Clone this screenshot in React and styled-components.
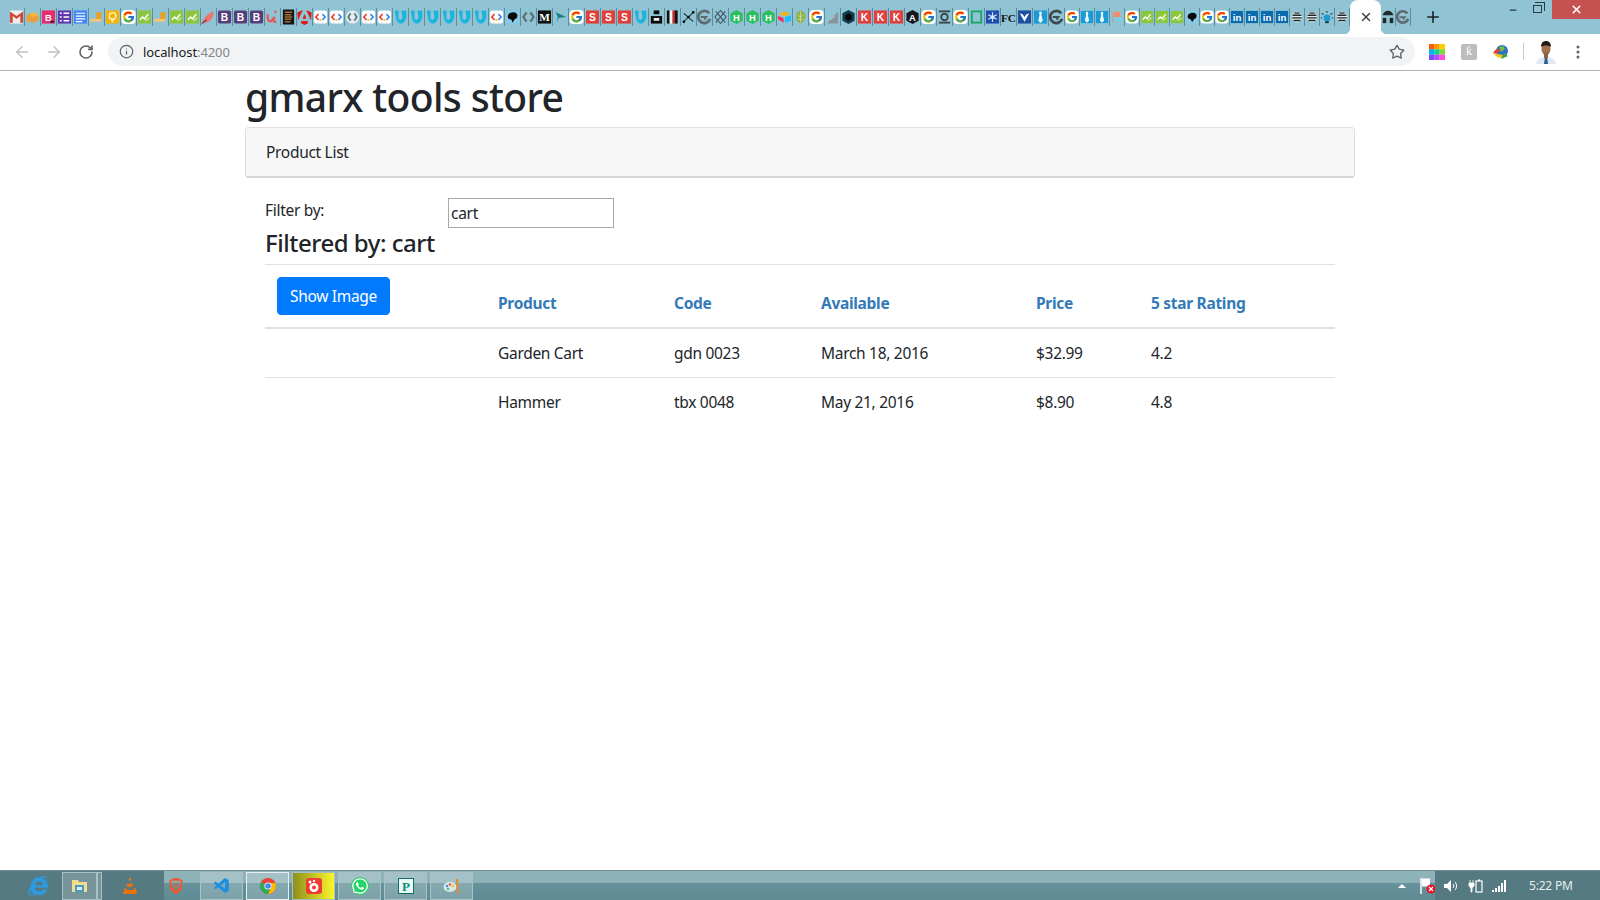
import React from 'react';
import styled, { createGlobalStyle } from 'styled-components';
import { ArrowLeft, ArrowRight, RotateCw, Info, Star, X, Plus, Minus } from 'lucide-react';
import { FcGoogle } from 'react-icons/fc';
import { FaWhatsapp, FaInternetExplorer } from 'react-icons/fa';
import { SiAngular, SiBrave, SiVlcmediaplayer } from 'react-icons/si';
import { VscVscode } from 'react-icons/vsc';

const GlobalStyle = createGlobalStyle`
  html, body { margin: 0; padding: 0; height: 100%; background: #fff; overflow: hidden; }
  #root { height: 100%; }
  * { box-sizing: border-box; }
`;

const Page = styled.div`
  display: flex;
  flex-direction: column;
  height: 900px;
  font-family: 'Noto Sans', 'Open Sans', sans-serif;
  color: #212529;
`;

/* browser chrome */
const TabStrip = styled.div`
  display: flex;
  height: 34px;
  padding-left: 9px;
  background: #90c4d4;
  flex-shrink: 0;
`;

const PinnedTab = styled.div`
  display: flex;
  align-items: center;
  justify-content: center;
  width: ${p => p.$w || 16}px;
  height: 18px;
  margin-top: 8px;
  border-right: 1px solid #5f8d9c;
  svg { display: block; }
`;

const ActiveTab = styled.div`
  position: relative;
  display: flex;
  align-items: center;
  justify-content: center;
  width: 31px;
  height: 34px;
  background: #fff;
  border-radius: 8px 8px 0 0;
  color: #3c4043;
  &::before, &::after {
    content: '';
    position: absolute;
    bottom: 0;
    width: 6px;
    height: 6px;
  }
  &::before { left: -6px; background: radial-gradient(circle at 0 0, transparent 6px, #fff 6.5px); }
  &::after { right: -6px; background: radial-gradient(circle at 100% 0, transparent 6px, #fff 6.5px); }
`;

const NewTab = styled.div`
  display: flex;
  align-items: center;
  justify-content: center;
  width: 24px;
  height: 34px;
  margin-left: 10px;
  color: #202124;
`;

const WindowControls = styled.div`
  display: flex;
  align-items: flex-start;
  margin-left: auto;
  height: 19px;
`;

const WindowButton = styled.div`
  display: flex;
  align-items: center;
  justify-content: center;
  width: ${p => p.$w}px;
  height: 19px;
  margin-left: ${p => (p.$close ? 4 : 0)}px;
  color: ${p => (p.$close ? '#fff' : '#2b3c42')};
  background: ${p => (p.$close ? '#c75050' : 'transparent')};
`;

const RestoreGlyph = styled.div`
  position: relative;
  width: 9px;
  height: 8px;
  margin-top: -1px;
  border: 1px solid #2b3c42;
  background: #90c4d4;
  &::before {
    content: '';
    position: absolute;
    top: -4px;
    left: 1px;
    width: 9px;
    height: 8px;
    border: 1px solid #2b3c42;
    border-left: 0;
    border-bottom: 0;
  }
`;

const Toolbar = styled.div`
  display: flex;
  align-items: center;
  height: 37px;
  padding: 0 0 1px 13px;
  background: #fff;
  border-bottom: 1px solid #b4b4b4;
  flex-shrink: 0;
`;

const NavButton = styled.div`
  display: flex;
  align-items: center;
  justify-content: center;
  width: 18px;
  height: 18px;
  margin-right: 14px;
  color: ${p => (p.$off ? '#bdc1c6' : '#5f6368')};
`;

const Omnibox = styled.div`
  display: flex;
  align-items: center;
  width: 1307px;
  height: 29px;
  margin-left: -1px;
  padding: 0 10px 0 11px;
  border-radius: 15px;
  background: #f1f3f4;
  font-size: 13px;
  color: #202124;
`;

const Url = styled.span`
  margin-left: 9px;
  letter-spacing: -0.1px;
  span { color: #80868b; }
`;

const StarButton = styled.div`
  display: flex;
  margin-left: auto;
  color: #5f6368;
`;

const ToolbarIcons = styled.div`
  display: flex;
  align-items: center;
  margin-left: 6px;
`;

const ExtIcon = styled.div`
  display: flex;
  align-items: center;
  justify-content: center;
  width: 32px;
  height: 24px;
`;

const KnownBadge = styled.div`
  display: flex;
  align-items: center;
  justify-content: center;
  width: 16px;
  height: 16px;
  border-radius: 2px;
  background: #bdbdbd;
  color: #fff;
  font: 12px 'Liberation Serif', serif;
`;

const ToolbarDivider = styled.div`
  width: 1px;
  height: 17px;
  margin: 0 6px;
  background: #c8ccd0;
`;

/* page */
const Main = styled.main`
  flex: 1;
  width: 1110px;
  margin-left: 245px;
`;

const Title = styled.h1`
  margin: 0;
  height: 56px;
  padding-top: 2px;
  font-size: 39px;
  font-weight: 500;
  line-height: 48px;
  letter-spacing: -0.65px;
  color: #212529;
`;

const PanelHeader = styled.div`
  display: flex;
  align-items: center;
  height: 51px;
  padding: 0 20px 1px 20px;
  font-size: 15.5px;
  letter-spacing: -0.3px;
  background: #f7f7f7;
  border: 1px solid #dfdfdf;
  border-bottom: 2px solid #d5d5d5;
  border-radius: 4px;
`;

const PanelBody = styled.div`
  padding: 20px 20px 0;
`;

const FilterRow = styled.div`
  display: flex;
  align-items: flex-start;
  height: 30px;
`;

const FilterLabel = styled.label`
  width: 183px;
  font-size: 15.5px;
  line-height: 24px;
  letter-spacing: -0.3px;
`;

const FilterInput = styled.input`
  width: 166px;
  height: 30px;
  padding: 1px 2px;
  border: 1px solid #a9a9a9;
  border-radius: 0;
  outline: none;
  font-family: inherit;
  font-size: 15.5px;
  letter-spacing: -0.3px;
  color: #212529;
`;

const FilterHeading = styled.h4`
  margin: 0;
  height: 36px;
  font-size: 24px;
  font-weight: 500;
  line-height: 29px;
  letter-spacing: -0.48px;
`;

const Table = styled.table`
  width: 1070px;
  border-collapse: collapse;
  table-layout: fixed;
  font-size: 15.5px;
  letter-spacing: -0.3px;
`;

const HeadCell = styled.th`
  width: ${p => p.$w}px;
  padding: 12px;
  text-align: left;
  vertical-align: bottom;
  font-weight: 700;
  line-height: 24px;
  color: #337ab7;
  border-top: 1px solid #dee2e6;
  border-bottom: 2px solid #dee2e6;
`;

const Cell = styled.td`
  height: 49px;
  padding: 12px;
  line-height: 24px;
  border-bottom: ${p => (p.$last ? 'none' : '1px solid #dee2e6')};
`;

const ShowButton = styled.button`
  display: block;
  width: 113px;
  height: 38px;
  padding: 0;
  border: 1px solid #007bff;
  border-radius: 4px;
  background: #007bff;
  color: #fff;
  font-family: inherit;
  font-size: 15.5px;
  letter-spacing: -0.3px;
`;

/* windows taskbar */
const Taskbar = styled.footer`
  display: flex;
  height: 30px;
  border-top: 1px solid #6f8f95;
  flex-shrink: 0;
`;

const TaskStart = styled.div`
  display: flex;
  align-items: center;
  width: 164px;
  padding-left: 24px;
  background: #557a82;
`;

const TaskMiddle = styled.div`
  display: flex;
  align-items: center;
  flex: 1;
  padding-left: 12px;
  gap: 3px;
  background: linear-gradient(180deg, #8db2b8 0, #8db2b8 40%, #66939b 42%, #5e8b94 100%);
`;

const TaskEnd = styled.div`
  display: flex;
  align-items: center;
  width: 165px;
  padding-left: 4px;
  background: #557a82;
`;

const TaskIcon = styled.div`
  display: flex;
  align-items: center;
  justify-content: center;
  width: ${p => p.$w || 28}px;
  height: 28px;
`;

const TaskButton = styled.div`
  display: flex;
  align-items: center;
  justify-content: center;
  width: ${p => p.$w || 43}px;
  height: 28px;
  margin-left: ${p => p.$ml || 0}px;
  border: 1px solid ${p => (p.$focus ? '#e6eeef' : '#a9c1c5')};
  background: ${p => p.$bg || 'rgba(255, 255, 255, 0.2)'};
`;

const BraveSlot = styled.div`
  position: relative;
  display: flex;
  align-items: center;
  justify-content: center;
  width: 24px;
  height: 29px;
  margin-left: -12px;
  color: #f0562a;
`;

const TrayFlag = styled.div`
  display: flex;
  margin-right: -1px;
`;

const TrayArrow = styled.div`
  width: 0;
  height: 0;
  margin-right: 11px;
  margin-left: auto;
  border-left: 4px solid transparent;
  border-right: 4px solid transparent;
  border-bottom: 4px solid #fff;
`;

const TrayIcon = styled.div`
  display: flex;
  align-items: center;
  justify-content: center;
  width: 24px;
  color: #fff;
`;

const Clock = styled.span`
  margin-left: 18px;
  font-size: 12px;
  letter-spacing: -0.2px;
  color: #e6eeee;
`;

const Box = ({ bg, r = 1, children }) => (
  <svg width="16" height="16" viewBox="0 0 16 16">
    <rect x="1" y="1" width="14" height="14" rx={r} fill={bg} />
    {children}
  </svg>
);

const Letter = ({ fill = '#fff', size = 11, family = 'Liberation Sans', weight = 700, children }) => (
  <text x="8" y="12" fontSize={size} fontFamily={family} fontWeight={weight} textAnchor="middle" fill={fill}>{children}</text>
);

const Wave = () => (
  <Box bg="#8cc63f" r={0}>
    <path d="M3 11l3-3 2 2 4-5" fill="none" stroke="#fff" strokeWidth="1.6" />
    <path d="M9 12l4-3" stroke="#dff0c4" strokeWidth="1.2" />
  </Box>
);

const Code = () => (
  <Box bg="#fff" r={3}>
    <path d="M6 5L3 8l3 3" fill="none" stroke="#ea4335" strokeWidth="1.8" />
    <path d="M10 5l3 3-3 3" fill="none" stroke="#4285f4" strokeWidth="1.8" />
    <path d="M7 11h2" stroke="#fbbc05" strokeWidth="1.8" />
  </Box>
);

const Ring = ({ color = '#5b7c86' }) => (
  <svg width="16" height="16" viewBox="0 0 16 16">
    <circle cx="8" cy="8" r="7" fill="#e8eef0" />
    <path d="M6 4L3.5 8 6 12M10 4l2.5 4-2.5 4" fill="none" stroke={color} strokeWidth="2" />
  </svg>
);

const Bee = () => (
  <svg width="16" height="16" viewBox="0 0 16 16">
    <ellipse cx="8" cy="8" rx="6" ry="6" fill="#e6eef0" />
    <path d="M3 6h10M2.500 9h11M4 12h8" stroke="#1e2528" strokeWidth="1.6" />
    <path d="M5 3.500h6" stroke="#1e2528" strokeWidth="1.4" />
  </svg>
);

const Swirl = ({ color = '#5d6b70' }) => (
  <svg width="16" height="16" viewBox="0 0 16 16">
    <path d="M13 4a6.500 6.500 0 1 0 1 6" fill="none" stroke={color} strokeWidth="3" />
    <path d="M4 8h6l-2 3" fill="none" stroke={color} strokeWidth="2" />
  </svg>
);

const Blob = () => (
  <svg width="16" height="16" viewBox="0 0 16 16">
    <rect x="1" y="1" width="14" height="14" fill="#86cbe8" />
    <path d="M3 8c0-4 3-5 6-5s5 2 4 5-2 1-3 3l-2 3-1-3C5 10 3 10 3 8z" fill="#0b0b0b" />
  </svg>
);

const Tie = () => (
  <Box bg="#1b9ad6" r={0}>
    <path d="M7 2h2l.5 2L9 6l1.500 6L8 14.500 5.500 12 7 6l-.5-2z" fill="#e8f6fc" />
  </Box>
);

const Uu = () => (
  <svg width="16" height="16" viewBox="0 0 16 16">
    <path d="M2 1h4c0 5-1 10 2 10 3 0 2-5 1-10h5c1 6 0 13-5 14-6 0-6-7-7-14z" fill="#19b5de" />
  </svg>
);

const BarOrange = () => (
  <svg width="16" height="16" viewBox="0 0 16 16">
    <rect x="8" y="3" width="5" height="8" fill="#f39c12" />
    <rect x="1" y="10" width="12" height="3" fill="#f8c471" />
  </svg>
);

const Favicons = {
  gmail: () => (
    <Box bg="#efefef" r={0}>
      <path d="M1 2v12h3V7l4 3 4-3v7h3V2L8 7z" fill="#d14836" />
    </Box>
  ),
  cake: () => (
    <svg width="16" height="16" viewBox="0 0 16 16">
      <ellipse cx="8" cy="9" rx="7" ry="5" fill="#e9a23b" />
      <path d="M5 5c3-3 8-2 9 1l-6 2z" fill="#f6b73c" />
    </svg>
  ),
  pinkB: () => (
    <Box bg="#e92c6c" r={0}>
      <Letter size={10}>B</Letter>
      <rect x="10" y="12" width="4" height="2" fill="#1d1b3a" />
    </Box>
  ),
  list: () => (
    <Box bg="#5f37b0" r={0}>
      <path d="M3 4h2M7 4h6M3 8h2M7 8h6M3 12h2M7 12h6" stroke="#fff" strokeWidth="1.6" />
    </Box>
  ),
  docs: () => (
    <Box bg="#4285f4" r={0}>
      <path d="M3 4h10M3 7h10M3 10h10M3 13h7" stroke="#fff" strokeWidth="1.3" />
    </Box>
  ),
  bar: BarOrange,
  bulb: () => (
    <Box bg="#f4b400" r={1}>
      <circle cx="8" cy="7" r="3.500" fill="none" stroke="#fff" strokeWidth="1.2" />
      <path d="M6.500 11h3M7 13h2" stroke="#fff" strokeWidth="1.2" />
    </Box>
  ),
  g: () => (
    <svg width="16" height="16" viewBox="0 0 16 16">
      <rect x="0.500" y="0.500" width="15" height="15" rx="4" fill="#fff" />
      <foreignObject x="1" y="1" width="14" height="14"><FcGoogle size={14} /></foreignObject>
    </svg>
  ),
  wave: Wave,
  feather: () => (
    <svg width="16" height="16" viewBox="0 0 16 16">
      <path d="M1 14c2-6 7-10 12-12 1 5-2 11-8 12z" fill="#ee7470" />
      <path d="M1 15l5-4" stroke="#7d3c52" strokeWidth="1.4" />
    </svg>
  ),
  b: () => (
    <Box bg="#563d7c" r={2}>
      <Letter>B</Letter>
    </Box>
  ),
  u: () => (
    <svg width="16" height="16" viewBox="0 0 16 16">
      <path d="M3 5C2 10 4 14 7 12l3-4c-1 4-1 6 2 5M10 3l2-1" fill="none" stroke="#e8585c" strokeWidth="2.4" />
    </svg>
  ),
  brown: () => (
    <svg width="16" height="16" viewBox="0 0 16 16">
      <rect x="2" y="0" width="12" height="16" fill="#151515" />
      <path d="M4 3h8M4 5.500h7M4 8h8M4 10.500h7M4 13h6" stroke="#a46f33" strokeWidth="1.6" />
    </svg>
  ),
  angular: () => <SiAngular size={15} color="#dd1b16" />,
  code: Code,
  ring: () => <Ring />,
  y: Uu,
  blob: Blob,
  greyRing: () => (
    <svg width="16" height="16" viewBox="0 0 16 16">
      <path d="M6 3L2.500 8 6 13M10 3l3.500 5L10 13" fill="none" stroke="#5d6b70" strokeWidth="2.2" />
    </svg>
  ),
  m: () => (
    <Box bg="#111" r={0}>
      <Letter family="Liberation Serif" size={12}>M</Letter>
    </Box>
  ),
  arrow: () => (
    <svg width="16" height="16" viewBox="0 0 16 16">
      <path d="M3 3l11 5-8 1-2 5 1-6z" fill="#17808a" />
    </svg>
  ),
  s: () => (
    <Box bg="#e0403a" r={0}>
      <Letter>S</Letter>
    </Box>
  ),
  yBlue: Uu,
  block: () => (
    <svg width="16" height="16" viewBox="0 0 16 16">
      <rect x="2" y="7" width="12" height="8" fill="#0a0a0a" />
      <rect x="5" y="1" width="6" height="4" fill="#0a0a0a" />
      <rect x="5" y="9" width="6" height="3" fill="#e8eef0" />
    </svg>
  ),
  stripes: () => (
    <svg width="16" height="16" viewBox="0 0 16 16">
      <rect x="2" y="1" width="3" height="14" fill="#111" />
      <rect x="5" y="1" width="3" height="14" fill="#f4f4f4" />
      <rect x="8" y="1" width="2.500" height="14" fill="#d21f26" />
      <rect x="10.500" y="1" width="3" height="14" fill="#111" />
    </svg>
  ),
  xnet: () => (
    <svg width="16" height="16" viewBox="0 0 16 16">
      <path d="M3 13L13 3M3 4l10 9" stroke="#22343b" strokeWidth="1.1" />
      <circle cx="3" cy="13" r="1.400" /><circle cx="13" cy="3" r="1.400" />
      <circle cx="8" cy="8" r="1.400" fill="#111" />
    </svg>
  ),
  swirl: () => <Swirl />,
  xdiamond: () => (
    <svg width="16" height="16" viewBox="0 0 16 16">
      <path d="M8 1l6 7-6 7-6-7zM3 2l10 12M13 2L3 14" fill="none" stroke="#3a5560" strokeWidth="1.1" />
    </svg>
  ),
  h: () => (
    <svg width="16" height="16" viewBox="0 0 16 16">
      <path d="M8 0.500l6.500 3.500v8L8 15.500 1.500 12V4z" fill="#2dbe60" />
      <Letter size={10}>H</Letter>
    </svg>
  ),
  air: () => (
    <svg width="16" height="16" viewBox="0 0 16 16">
      <path d="M2 5l6-3 6 3-6 2z" fill="#fcb400" />
      <path d="M8.500 8L15 6v6l-6.500 2z" fill="#18bfff" />
      <path d="M1 7l6 2v5L1 10z" fill="#f82b60" />
    </svg>
  ),
  leaf: () => (
    <svg width="16" height="16" viewBox="0 0 16 16">
      <path d="M8 1c4 1 6 4 5 8-1 3-3 5-5 6-3-2-5-4-5-7 0-3 2-6 5-7z" fill="#8fb04a" />
      <path d="M8 2v12M5 6l3 2 3-2M5 10l3 1 3-1" stroke="#c4dc8c" strokeWidth="1" fill="none" />
    </svg>
  ),
  stair: () => (
    <svg width="16" height="16" viewBox="0 0 16 16">
      <path d="M2 15L14 2v13z" fill="#8a9499" />
      <path d="M6 11l4-4" stroke="#c8d0d4" />
    </svg>
  ),
  hex: () => (
    <svg width="16" height="16" viewBox="0 0 16 16">
      <path d="M8 0.500l6.500 3.500v8L8 15.500 1.500 12V4z" fill="#123c4a" />
      <path d="M8 4l3.500 2v4L8 12 4.500 10V6z" fill="#060606" />
    </svg>
  ),
  k: () => (
    <Box bg="#e0403f" r={0}>
      <Letter>K</Letter>
    </Box>
  ),
  aBlack: () => (
    <svg width="16" height="16" viewBox="0 0 16 16">
      <path d="M8 0.500l6.500 3.500v8L8 15.500 1.500 12V4z" fill="#15191e" />
      <Letter size={10}>A</Letter>
    </svg>
  ),
  o: () => (
    <svg width="16" height="16" viewBox="0 0 16 16">
      <rect x="2" y="1" width="12" height="2" fill="#3b474c" />
      <rect x="2" y="13" width="12" height="2" fill="#3b474c" />
      <circle cx="8" cy="8" r="3.500" fill="none" stroke="#3b474c" strokeWidth="2" />
    </svg>
  ),
  rect: () => (
    <svg width="16" height="16" viewBox="0 0 16 16">
      <rect x="3" y="2" width="10" height="12" fill="none" stroke="#1aa866" strokeWidth="2" />
    </svg>
  ),
  snow: () => (
    <Box bg="#1f4eb0" r={0}>
      <path d="M8 3v10M3.500 5.500l9 5M12.500 5.500l-9 5" stroke="#dce8ff" strokeWidth="1.200" />
      <circle cx="8" cy="8" r="2" fill="#dce8ff" />
    </Box>
  ),
  fc: () => (
    <svg width="16" height="16" viewBox="0 0 16 16">
      <text x="8" y="13" fontSize="12" fontFamily="Liberation Serif" fontWeight="700" textAnchor="middle" fill="#111">FC</text>
    </svg>
  ),
  vBlue: () => (
    <Box bg="#1c4fa0" r={0}>
      <path d="M3 4l5 9 5-9-3 1-2 3-2-3z" fill="#fff" />
    </Box>
  ),
  tie: Tie,
  darkSwirl: () => <Swirl color="#3c4a52" />,
  flag: () => (
    <svg width="16" height="16" viewBox="0 0 16 16">
      <path d="M3 2v13" stroke="#9bb0b8" strokeWidth="1.500" />
      <path d="M4 2h8l-1 3 2 3H4z" fill="#f28a70" />
      <rect x="6" y="8" width="8" height="5" fill="#7ecbe8" />
    </svg>
  ),
  linkedin: () => (
    <Box bg="#0a6ab0" r={0}>
      <text x="8" y="13" fontSize="11" fontFamily="Liberation Sans" fontWeight="700" textAnchor="middle" fill="#fff">in</text>
    </Box>
  ),
  bee: Bee,
  bulbBlue: () => (
    <svg width="16" height="16" viewBox="0 0 16 16">
      <circle cx="8" cy="9" r="4" fill="#1d9ad6" />
      <rect x="6" y="13" width="4" height="2" fill="#222" />
      <path d="M8 1v2M2 4l2 1M14 4l-2 1M1 9h1M14 9h1" stroke="#222" strokeWidth="1.200" />
    </svg>
  ),
  headset: () => (
    <svg width="16" height="16" viewBox="0 0 16 16">
      <path d="M2 6c1-7 11-7 12 0z" fill="#20282c" />
      <rect x="2" y="9" width="4" height="6" fill="#20282c" />
      <rect x="10" y="9" width="4" height="6" fill="#20282c" />
    </svg>
  ),
};

const kinds = [
  'gmail', 'cake', 'pinkB', 'list', 'docs', 'bar', 'bulb', 'g', 'wave', 'bar', 'wave', 'wave', 'feather',
  'b', 'b', 'b', 'u', 'brown', 'angular', 'code', 'code', 'ring', 'code', 'code',
  'y', 'y', 'y', 'y', 'y', 'y', 'code', 'blob', 'greyRing', 'm', 'arrow', 'g', 's', 's', 's', 'yBlue',
  'block', 'stripes', 'xnet', 'swirl', 'xdiamond', 'h', 'h', 'h', 'air', 'leaf', 'g', 'stair', 'hex',
  'k', 'k', 'k', 'aBlack', 'g', 'o', 'g', 'rect', 'snow', 'fc', 'vBlue', 'tie', 'darkSwirl', 'g',
  'tie', 'tie', 'flag', 'g', 'wave', 'wave', 'wave', 'blob', 'g', 'g',
  'linkedin', 'linkedin', 'linkedin', 'linkedin', 'bee', 'bee', 'bulbBlue', 'bee',
];

const columns = [
  { label: 'Product', w: 176 },
  { label: 'Code', w: 147 },
  { label: 'Available', w: 215 },
  { label: 'Price', w: 115 },
  { label: '5 star Rating', w: 196 },
];

const products = [
  { name: 'Garden Cart', code: 'gdn 0023', date: 'March 18, 2016', price: '$32.99', rating: '4.2' },
  { name: 'Hammer', code: 'tbx 0048', date: 'May 21, 2016', price: '$8.90', rating: '4.8' },
];

const ColorGrid = () => (
  <svg width="16" height="16" viewBox="0 0 16 16">
    <rect width="5.400" height="5.400" fill="#ff5a00" /><rect x="5.300" width="5.400" height="5.400" fill="#ff9a00" /><rect x="10.600" width="5.400" height="5.400" fill="#ffd000" />
    <rect y="5.300" width="5.400" height="5.400" fill="#00b4f0" /><rect x="5.300" y="5.300" width="5.400" height="5.400" fill="#17d38a" /><rect x="10.600" y="5.300" width="5.400" height="5.400" fill="#7ddc3c" />
    <rect y="10.600" width="5.400" height="5.400" fill="#7a4dff" /><rect x="5.300" y="10.600" width="5.400" height="5.400" fill="#b54dff" /><rect x="10.600" y="10.600" width="5.400" height="5.400" fill="#ff4de0" />
  </svg>
);

const IdmGlobe = () => (
  <svg width="18" height="16" viewBox="0 0 18 16">
    <circle cx="10" cy="7" r="6" fill="#2f6fc4" />
    <path d="M7 3l4-1 2 3-4 3z" fill="#6cc04a" />
    <path d="M1 9c2-4 5-5 8-4L7 7c-1 1-2 2-2 3z" fill="#e8412c" />
    <path d="M1 9c2 3 6 5 9 5l1-3-5-1z" fill="#f6c21c" />
    <path d="M9 15l3-6 4 3z" fill="#3f9e3f" />
  </svg>
);

const Avatar = () => (
  <svg width="20" height="24" viewBox="0 0 20 24">
    <path d="M0 24c1-5 5-7 10-7s9 2 10 7z" fill="#dfe9f2" />
    <path d="M9 17h2l1 7H8z" fill="#2b5c8e" />
    <ellipse cx="10" cy="9" rx="4.500" ry="6" fill="#a4714e" />
    <path d="M5 7c0-4 2-6 5-6s5 2 5 6c-2-2-8-2-10 0z" fill="#221a14" />
    <rect x="8" y="13" width="4" height="5" fill="#8f5f3f" />
  </svg>
);

const Dots = () => (
  <svg width="4" height="14" viewBox="0 0 4 14">
    <circle cx="2" cy="2" r="1.500" fill="#5f6368" /><circle cx="2" cy="7" r="1.500" fill="#5f6368" /><circle cx="2" cy="12" r="1.500" fill="#5f6368" />
  </svg>
);

const ChromeLogo = () => (
  <svg width="16" height="16" viewBox="0 0 16 16">
    <circle cx="8" cy="8" r="8" fill="#ea4335" />
    <path d="M8 8L1 4a8 8 0 0 0 7 12l4-8z" fill="#34a853" />
    <path d="M8 5h7.400A8 8 0 0 1 8 16l4-8z" fill="#fbbc05" />
    <circle cx="8" cy="8" r="3.600" fill="#fff" /><circle cx="8" cy="8" r="2.800" fill="#4285f4" />
  </svg>
);

const RedCamera = () => (
  <svg width="16" height="16" viewBox="0 0 16 16">
    <rect width="16" height="16" rx="3" fill="#ef3a35" />
    <circle cx="8" cy="9.500" r="4.500" fill="#fff" /><circle cx="8" cy="9.500" r="2" fill="#ef3a35" />
    <circle cx="4" cy="4" r="1.500" fill="#fff" /><circle cx="8" cy="3" r="1.200" fill="#fff" />
  </svg>
);

const PublisherLogo = () => (
  <svg width="16" height="16" viewBox="0 0 16 16">
    <rect x="0.500" y="0.500" width="15" height="15" fill="#e9fbf6" stroke="#0e6f62" />
    <text x="8" y="13" fontSize="13" fontFamily="Liberation Serif" fontWeight="700" textAnchor="middle" fill="#0a8f7c">P</text>
  </svg>
);

const PaintLogo = () => (
  <svg width="18" height="18" viewBox="0 0 18 18">
    <ellipse cx="7" cy="10" rx="6.500" ry="5" fill="#dce6ea" />
    <circle cx="4" cy="9" r="1.200" fill="#3f8fd6" /><circle cx="7" cy="7.500" r="1.200" fill="#e84c3d" />
    <circle cx="10" cy="9" r="1.200" fill="#f1c40f" /><circle cx="5" cy="12" r="1.200" fill="#2ecc71" />
    <path d="M14 2l1 15" stroke="#e08a2e" strokeWidth="2" />
  </svg>
);

const SpeakerIcon = () => (
  <svg width="16" height="16" viewBox="0 0 16 16">
    <path d="M1 6h3l4-4v12l-4-4H1z" fill="#fff" />
    <path d="M10 6c1 1 1 3 0 4M12 4c2 2 2 6 0 8" fill="none" stroke="#fff" />
  </svg>
);

const PowerIcon = () => (
  <svg width="16" height="16" viewBox="0 0 16 16">
    <path d="M3 2v3M6 2v3M2 5h5v3l-2 2v4H4v-4L2 8z" fill="#fff" stroke="#fff" strokeWidth="0.800" />
    <rect x="9" y="3" width="6" height="11" fill="none" stroke="#fff" strokeWidth="1.200" />
    <rect x="11" y="1.500" width="2" height="1.500" fill="#fff" />
  </svg>
);

const SignalIcon = () => (
  <svg width="16" height="14" viewBox="0 0 16 14">
    <rect x="1" y="11" width="2" height="2" fill="#fff" /><rect x="4" y="9" width="2" height="4" fill="#fff" />
    <rect x="7" y="7" width="2" height="6" fill="#fff" /><rect x="10" y="4" width="2" height="9" fill="#fff" />
    <rect x="13" y="1" width="2" height="12" fill="#fff" />
  </svg>
);

const FlagIcon = () => (
  <svg width="16" height="18" viewBox="0 0 16 18">
    <path d="M1 1v16" stroke="#fff" strokeWidth="1.500" />
    <path d="M2 1.500h8v8H2z" fill="#fff" />
    <circle cx="11" cy="12" r="4.500" fill="#e81123" />
    <path d="M9 10l4 4M13 10l-4 4" stroke="#fff" strokeWidth="1.200" />
  </svg>
);

const FolderGlyph = () => (
  <svg width="17" height="15" viewBox="0 0 17 15">
    <path d="M1 2h6l1 2h8v10H1z" fill="#f3dc8c" />
    <rect x="4" y="7" width="9" height="7" fill="#4a9bc8" />
    <rect x="6" y="9" width="5" height="3" fill="#dcecf4" />
  </svg>
);

const BrowserChrome = () => (
  <>
    <TabStrip>
      {kinds.map((kind, i) => {
        const Icon = Favicons[kind];
        return (
          <PinnedTab key={i} $w={i < 66 ? 16 : 15}>
            <Icon />
          </PinnedTab>
        );
      })}
      <ActiveTab><X size={14} strokeWidth={2.500} /></ActiveTab>
      <PinnedTab $w={15}><Favicons.headset /></PinnedTab>
      <PinnedTab $w={15}><Swirl /></PinnedTab>
      <NewTab><Plus size={18} strokeWidth={2.200} /></NewTab>
      <WindowControls>
        <WindowButton $w={26}><Minus size={10} strokeWidth={3} /></WindowButton>
        <WindowButton $w={22}><RestoreGlyph /></WindowButton>
        <WindowButton $w={48} $close><X size={13} strokeWidth={3} /></WindowButton>
      </WindowControls>
    </TabStrip>
    <Toolbar>
      <NavButton $off><ArrowLeft size={18} strokeWidth={2} /></NavButton>
      <NavButton $off><ArrowRight size={18} strokeWidth={2} /></NavButton>
      <NavButton><RotateCw size={16} strokeWidth={2.400} /></NavButton>
      <Omnibox>
        <Info size={15} color="#5f6368" strokeWidth={2} />
        <Url>localhost<span>:4200</span></Url>
        <StarButton><Star size={16} strokeWidth={2} /></StarButton>
      </Omnibox>
      <ToolbarIcons>
        <ExtIcon><ColorGrid /></ExtIcon>
        <ExtIcon><KnownBadge>ƙ</KnownBadge></ExtIcon>
        <ExtIcon><IdmGlobe /></ExtIcon>
        <ToolbarDivider />
        <ExtIcon><Avatar /></ExtIcon>
        <ExtIcon><Dots /></ExtIcon>
      </ToolbarIcons>
    </Toolbar>
  </>
);

const WindowsTaskbar = () => (
  <Taskbar>
    <TaskStart>
      <TaskIcon><FaInternetExplorer size={20} color="#2f9ae0" /></TaskIcon>
      <TaskButton $w={35} $ml={10}><FolderGlyph /></TaskButton>
      <TaskButton $w={5} />
      <TaskIcon $w={56}><SiVlcmediaplayer size={16} color="#e8730c" /></TaskIcon>
    </TaskStart>
    <TaskMiddle>
      <BraveSlot><SiBrave size={16} /></BraveSlot>
      <TaskButton $ml={9}><VscVscode size={18} color="#1d8fe0" /></TaskButton>
      <TaskButton $focus><ChromeLogo /></TaskButton>
      <TaskButton $bg="linear-gradient(90deg, #8d8f1e, #fbf52a)"><RedCamera /></TaskButton>
      <TaskButton><FaWhatsapp size={18} color="#fff" style={{ background: '#25d366', borderRadius: '50%' }} /></TaskButton>
      <TaskButton><PublisherLogo /></TaskButton>
      <TaskButton><PaintLogo /></TaskButton>
      <TrayArrow />
      <TrayFlag><FlagIcon /></TrayFlag>
    </TaskMiddle>
    <TaskEnd>
      <TrayIcon><SpeakerIcon /></TrayIcon>
      <TrayIcon><PowerIcon /></TrayIcon>
      <TrayIcon><SignalIcon /></TrayIcon>
      <Clock>5:22 PM</Clock>
    </TaskEnd>
  </Taskbar>
);

export default function App() {
  return (
    <Page>
      <GlobalStyle />
      <BrowserChrome />
      <Main>
        <Title>gmarx tools store</Title>
        <PanelHeader>Product List</PanelHeader>
        <PanelBody>
          <FilterRow>
            <FilterLabel>Filter by:</FilterLabel>
            <FilterInput defaultValue="cart" />
          </FilterRow>
          <FilterHeading>Filtered by: cart</FilterHeading>
          <Table>
            <thead>
              <tr>
                <HeadCell $w={221}><ShowButton>Show Image</ShowButton></HeadCell>
                {columns.map(col => (
                  <HeadCell key={col.label} $w={col.w}>{col.label}</HeadCell>
                ))}
              </tr>
            </thead>
            <tbody>
              {products.map((p, i) => {
                const last = i === products.length - 1;
                return (
                  <tr key={p.code}>
                    <Cell $last={last} />
                    <Cell $last={last}>{p.name}</Cell>
                    <Cell $last={last}>{p.code}</Cell>
                    <Cell $last={last}>{p.date}</Cell>
                    <Cell $last={last}>{p.price}</Cell>
                    <Cell $last={last}>{p.rating}</Cell>
                  </tr>
                );
              })}
            </tbody>
          </Table>
        </PanelBody>
      </Main>
      <WindowsTaskbar />
    </Page>
  );
}
